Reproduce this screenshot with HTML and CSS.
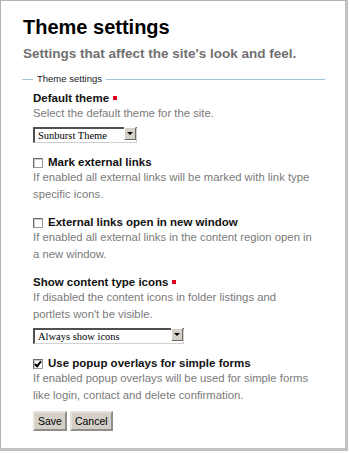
FILE: index.html
```html
<!DOCTYPE html>
<html>
<head>
    <meta charset="utf-8">
    <title>Theme settings</title>
    <link rel="stylesheet" href="styles.css">
</head>
<body>
    <div class="frame">
        <h1 class="title">Theme settings</h1>
        <p class="lead">Settings that affect the site's look and feel.</p>

        <form class="settings">
            <fieldset class="group">
                <legend>Theme settings</legend>

                <div class="field">
                    <label class="label" for="theme">Default theme<span class="required"></span></label>
                    <div class="help">Select the default theme for the site.</div>
                    <span class="select select_short">
                        <select id="theme"><option>Sunburst Theme</option></select>
                    </span>
                </div>

                <div class="field">
                    <label class="check"><input type="checkbox"><span class="label">Mark external links</span></label>
                    <div class="help">If enabled all external links will be marked with link type<br>specific icons.</div>
                </div>

                <div class="field">
                    <label class="check"><input type="checkbox"><span class="label">External links open in new window</span></label>
                    <div class="help">If enabled all external links in the content region open in<br>a new window.</div>
                </div>

                <div class="field">
                    <label class="label" for="icons">Show content type icons<span class="required"></span></label>
                    <div class="help">If disabled the content icons in folder listings and<br>portlets won't be visible.</div>
                    <span class="select select_long">
                        <select id="icons"><option>Always show icons</option></select>
                    </span>
                </div>

                <div class="field">
                    <label class="check"><input type="checkbox" checked><span class="label">Use popup overlays for simple forms</span></label>
                    <div class="help">If enabled popup overlays will be used for simple forms<br>like login, contact and delete confirmation.</div>
                </div>

                <div class="actions">
                    <button type="button">Save</button>
                    <button type="button">Cancel</button>
                </div>
            </fieldset>
        </form>
    </div>
</body>
</html>
```

FILE: styles.css
```css
body {
    margin: 0;
    background-color: #fff;
    font-family: "Liberation Sans", Arial, sans-serif;
    color: #111;
}

.frame {
    box-sizing: border-box;
    width: 348px;
    height: 451px;
    padding: 14px 20px 0 21px;
    border-top: 1px solid #b4b4b4;
    border-left: 1px solid #b4b4b4;
    border-right: 3px solid #c2c2c2;
    border-bottom: 3px solid #c2c2c2;
}

.title {
    margin: 0 0 0 1px;
    font-size: 20px;
    line-height: 24px;
    font-weight: bold;
    color: #000;
}

.lead {
    margin: 6px 0 0 1px;
    font-size: 13.5px;
    line-height: 17px;
    font-weight: bold;
    color: #707070;
}



/* fieldset with only the top rule */
.group {
    margin: 11px 0 0 0;
    padding: 7px 2px 0 11px;
    border: 0;
    border-top: 1px solid #9ec3dd;
}
.group legend {
    padding: 0 4px;
    font-size: 9.5px;
    line-height: 12px;
    color: #222;
}

.field {
    margin-bottom: 13px;
}
.label {
    display: block;
    font-size: 11.5px;
    line-height: 13px;
    font-weight: bold;
    color: #111;
}
.required {
    display: inline-block;
    width: 4px;
    height: 4px;
    margin-left: 4px;
    vertical-align: 2px;
    background-color: #e0001b;
}
.help {
    font-size: 11.3px;
    line-height: 17px;
    color: #7a7a7a;
}



.select {
    position: relative;
    display: inline-block;
    margin-top: 3px;
    vertical-align: top;
}
.select select {
    appearance: none;
    -webkit-appearance: none;
    box-sizing: border-box;
    height: 16px;
    margin: 0;
    padding: 0 14px 0 3px;
    border-top: 2px solid #505050;
    border-left: 2px solid #505050;
    border-right: 1px solid #d0d0d0;
    border-bottom: 1px solid #d0d0d0;
    border-radius: 0;
    background-color: #fff;
    font-family: "Liberation Serif", "Times New Roman", serif;
    font-size: 10.5px;
    line-height: 13px;
    color: #000;
}
.select_short select {
    width: 104px;
}
.select_long select {
    width: 151px;
}
/* the little drop button over the right end */
.select::after {
    content: "";
    position: absolute;
    top: 2px;
    right: 1px;
    box-sizing: border-box;
    width: 12px;
    height: 13px;
    background-color: #d4d0c8;
    border-top: 1px solid #fff;
    border-left: 1px solid #fff;
    border-right: 1px solid #6a6a6a;
    border-bottom: 1px solid #6a6a6a;
}
.select::before {
    content: "";
    position: absolute;
    z-index: 1;
    top: 7px;
    right: 4px;
    border-left: 3px solid transparent;
    border-right: 3px solid transparent;
    border-top: 3px solid #000;
}



.check {
    display: flex;
    align-items: center;
    gap: 5px;
}
.check input {
    appearance: none;
    -webkit-appearance: none;
    position: relative;
    box-sizing: border-box;
    width: 10px;
    height: 10px;
    margin: 0;
    border: 1px solid #6b6b6b;
    border-right-color: #9a9a9a;
    border-bottom-color: #9a9a9a;
    box-shadow: inset 1px 1px 0 #c9c9c9;
    background-color: #fff;
}
.check input:checked::after {
    content: "";
    position: absolute;
    left: 2px;
    top: 0px;
    width: 2px;
    height: 5px;
    border-right: 2px solid #000;
    border-bottom: 2px solid #000;
    transform: rotate(40deg);
}



.actions {
    display: flex;
    gap: 3px;
    margin-top: -6px;
}
.actions button {
    height: 20px;
    padding: 0 3px;
    border: 2px outset #e4e1da;
    border-radius: 0;
    background-color: #d4d0c8;
    font-family: "Liberation Sans", Arial, sans-serif;
    font-size: 10.5px;
    line-height: 16px;
    color: #000;
}
```
